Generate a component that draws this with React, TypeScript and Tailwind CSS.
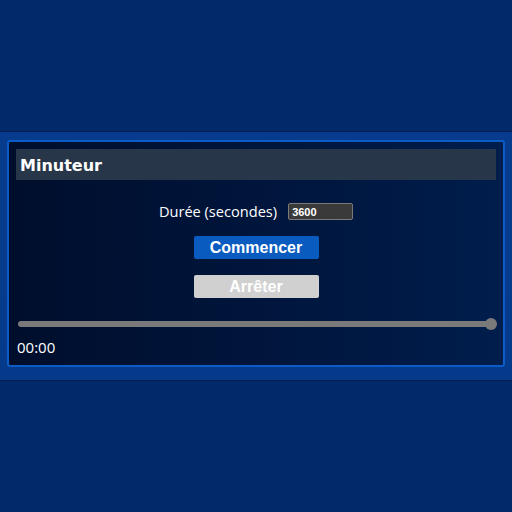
import { useState } from 'react';

export default function App() {
  const [seconds, setSeconds] = useState('3600');

  return (
    <div className="min-h-[512px] w-[512px] bg-[#02296a] flex flex-col justify-center">
      {/* Outer band */}
      <div className="h-[250px] border-y border-[#011f55] bg-gradient-to-b from-[#063b8e] to-[#053a8b] px-[7px] pt-[8px]">
        {/* Panel */}
        <div className="h-[227px] rounded-[3px] border-2 border-[#0b5cc6] bg-gradient-to-r from-[#000e2c] to-[#001d4c] px-[7px] pt-[7px]">
          <div className="h-[31px] bg-[#283649] px-[4px] flex items-center">
            <h1
              className="text-[16px] font-bold text-white translate-y-[1px]"
              style={{ fontFamily: '"DejaVu Sans", sans-serif' }}
            >
              Minuteur
            </h1>
          </div>

          <div className="flex flex-col items-center">
            <div className="mt-[23px] flex items-center gap-[11px] h-[17px]">
              <label
                htmlFor="duree"
                className="text-[14.6px] text-white leading-none"
                style={{ fontFamily: '"Open Sans", sans-serif' }}
              >
                Durée (secondes)
              </label>
              <input
                id="duree"
                value={seconds}
                onChange={(e) => setSeconds(e.target.value)}
                className="w-[65px] h-[17px] rounded-[2px] border border-[#7a7a7a] bg-[#3a3a3a] px-[3px] text-[11px] font-bold text-white outline-none"
                style={{ fontFamily: '"Liberation Sans", sans-serif' }}
              />
            </div>

            <button
              type="button"
              className="mt-[16px] w-[125px] h-[23px] rounded-[2px] bg-[#0a5bbf] text-[16px] font-bold text-white leading-none"
              style={{ fontFamily: '"Liberation Sans", sans-serif' }}
            >
              Commencer
            </button>
            <button
              type="button"
              className="mt-[16px] w-[125px] h-[23px] rounded-[2px] bg-[#d0d0d0] text-[16px] font-bold text-white leading-none"
              style={{ fontFamily: '"Liberation Sans", sans-serif' }}
            >
              Arrêter
            </button>
          </div>

          {/* Slider */}
          <div className="mt-[20px] h-[12px] flex items-center pl-[2px] pr-[5px]">
            <div className="flex-1 h-[6px] rounded-full bg-[#7a7a7a]" />
            <div className="-ml-[6px] -mr-[6px] w-[12px] h-[12px] rounded-full bg-[#7a7a7a]" />
          </div>

          <div
            className="mt-[7px] pl-[1px] text-[15px] leading-[20px] text-white"
            style={{ fontFamily: '"Open Sans", sans-serif' }}
          >
            00:00
          </div>
        </div>
      </div>
    </div>
  );
}
